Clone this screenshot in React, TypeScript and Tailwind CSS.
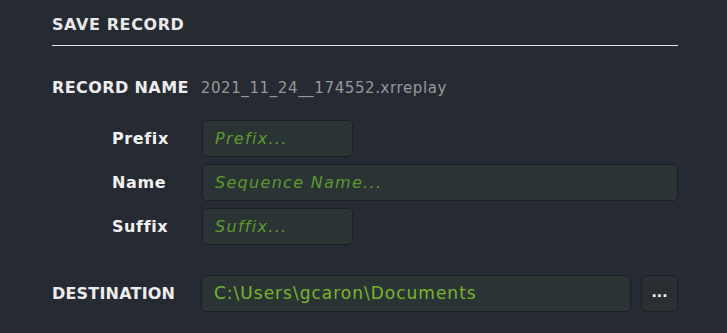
import React from 'react';

const font = { fontFamily: '"DejaVu Sans", "Noto Sans", sans-serif' };

const Field = ({ label, placeholder, wide }: { label: string; placeholder: string; wide?: boolean }) => (
  <div className="flex items-center h-[37px]">
    <div className="w-[90px] pl-[60px] box-content text-[16px] font-semibold text-[#f2f2f2] tracking-[0.6px]">{label}</div>
    <div
      className={`${wide ? 'flex-1' : 'w-[151px]'} h-full flex items-center px-3 rounded-[5px] bg-[#2b3435] border border-[#1b1e23] text-[16px] italic text-[#5d9a2b] tracking-[1.3px]`}
    >
      {placeholder}
    </div>
  </div>
);

const App: React.FC = () => {
  return (
    <div className="w-[727px] h-[333px] bg-[#262a33] overflow-hidden" style={font}>
      <div className="ml-[52px] w-[626px] pt-[15px]">
        {/* header */}
        <h2 className="text-[16px] font-bold text-[#e8e8e8] leading-[20px] tracking-[0.6px]">SAVE RECORD</h2>
        <div className="mt-[10px] h-px bg-[#e6e6e6]" />

        {/* record name */}
        <div className="flex items-baseline mt-[30px]">
          <span className="text-[16px] font-bold text-[#ededed] tracking-[0.4px]">RECORD NAME</span>
          <span className="ml-[12px] text-[15px] text-[#9a9a9a] tracking-[0.6px]">2021_11_24__174552.xrreplay</span>
        </div>

        {/* fields */}
        <div className="mt-[20px] flex flex-col gap-[7px]">
          <Field label="Prefix" placeholder="Prefix..." />
          <Field label="Name" placeholder="Sequence Name..." wide />
          <Field label="Suffix" placeholder="Suffix..." />
        </div>

        {/* destination */}
        <div className="flex items-center h-[37px] mt-[30px]">
          <div className="w-[149px] text-[16px] font-bold text-[#ededed] tracking-[0.2px]">DESTINATION</div>
          <div className="flex-1 h-full flex items-center px-3 rounded-[5px] bg-[#2b3435] border border-[#1b1e23] text-[17px] text-[#79b52a] tracking-[1px]">
            C:\Users\gcaron\Documents
          </div>
          <button className="ml-[10px] w-[37px] h-full rounded-[5px] bg-[#2a2f33] border border-[#1b1e23] text-white font-bold text-[14px] leading-none pb-[4px]">
            ...
          </button>
        </div>
      </div>
    </div>
  );
};

export default App;
